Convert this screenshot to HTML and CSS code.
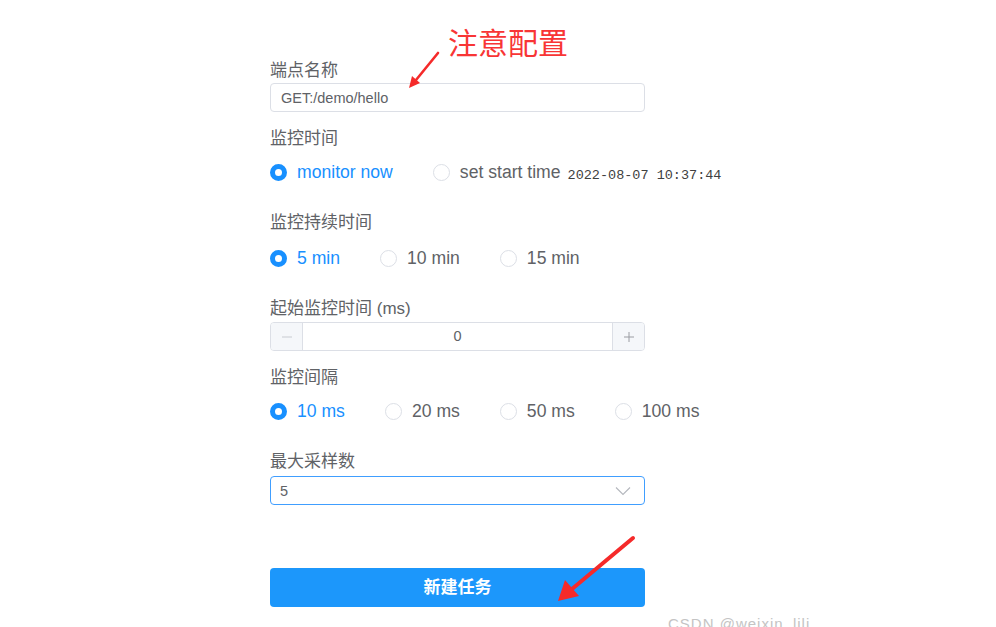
FILE: index.html
```html
<!DOCTYPE html>
<html>
<head>
<meta charset="utf-8">
<link rel="stylesheet" href="styles.css">
</head>
<body>
<div class="page">
  <form class="form">
    <div class="item item-input">
      <div class="label">端点名称</div>
      <div class="input">GET:/demo/hello</div>
    </div>
    <div class="item item-radio">
      <div class="label">监控时间</div>
      <div class="radios">
        <span class="radio checked"><span class="dot"></span><span class="rtext">monitor now</span></span>
        <span class="radio last"><span class="dot"></span><span class="rtext">set start time</span><span class="date">2022-08-07 10:37:44</span></span>
      </div>
    </div>
    <div class="item item-radio">
      <div class="label">监控持续时间</div>
      <div class="radios radios-loose">
        <span class="radio checked"><span class="dot"></span><span class="rtext">5 min</span></span>
        <span class="radio"><span class="dot"></span><span class="rtext">10 min</span></span>
        <span class="radio"><span class="dot"></span><span class="rtext">15 min</span></span>
      </div>
    </div>
    <div class="item item-input item-number">
      <div class="label">起始监控时间 (ms)</div>
      <div class="number">
        <span class="step minus"><svg width="12" height="12" viewBox="0 0 12 12"><path d="M1 6h10" stroke="#c8cbd1" stroke-width="1"/></svg></span>
        <span class="num">0</span>
        <span class="step plus"><svg width="12" height="12" viewBox="0 0 12 12"><path d="M1 6h10M6 1v10" stroke="#9a9ca2" stroke-width="1"/></svg></span>
      </div>
    </div>
    <div class="item item-radio">
      <div class="label">监控间隔</div>
      <div class="radios">
        <span class="radio checked"><span class="dot"></span><span class="rtext">10 ms</span></span>
        <span class="radio"><span class="dot"></span><span class="rtext">20 ms</span></span>
        <span class="radio"><span class="dot"></span><span class="rtext">50 ms</span></span>
        <span class="radio"><span class="dot"></span><span class="rtext">100 ms</span></span>
      </div>
    </div>
    <div class="item item-select">
      <div class="label">最大采样数</div>
      <div class="select"><span>5</span><svg width="16" height="10" viewBox="0 0 16 10"><path d="M1 1.5l7 7 7-7" fill="none" stroke="#b4b7bd" stroke-width="1.1"/></svg></div>
    </div>
    <div class="submit">新建任务</div>
  </form>
  <div class="note">注意配置</div>
  <svg class="arrows" width="996" height="627" viewBox="0 0 996 627">
    <path d="M438 53 L416 80" stroke="#f52a2a" stroke-width="2.6" stroke-linecap="round"/>
    <polygon points="409,88 412,76 420,83" fill="#f52a2a"/>
    <path d="M633 538 L572 589" stroke="#f52a2a" stroke-width="4" stroke-linecap="round"/>
    <polygon points="558,601 565,580 579,596" fill="#f52a2a"/>
  </svg>
  <div class="watermark">CSDN @weixin_lili</div>
</div>
</body>
</html>
```
FILE: styles.css
```css
html, body {
  margin: 0;
  padding: 0;
  background: #fff;
}
.page {
  position: relative;
  width: 996px;
  height: 627px;
  overflow: hidden;
  font-family: "Liberation Sans", "Noto Sans CJK SC", sans-serif;
}
.form {
  margin-left: 270px;
  width: 375px;
  padding-top: 59px;
}
.label {
  font-size: 17px;
  line-height: 24px;
  height: 24px;
  color: #606266;
}
.item-number .label {
  margin-bottom: 1px;
}
.item-select .label {
  margin-bottom: 2px;
}
.item-input {
  margin-bottom: 15px;
}
.item-radio {
  margin-bottom: 27px;
}
.input {
  box-sizing: border-box;
  height: 29px;
  border: 1px solid #dcdfe6;
  border-radius: 4px;
  padding: 0 10px;
  font-size: 14.5px;
  line-height: 28px;
  color: #606266;
}
.radios {
  margin-top: 9px;
  display: flex;
  align-items: center;
  height: 24px;
}
.radios-loose {
  margin-top: 11px;
}
.radio {
  display: flex;
  align-items: center;
  margin-right: 40px;
  font-size: 17.6px;
  color: #606266;
  white-space: nowrap;
}
.radio.last { margin-right: 0; }
.dot {
  box-sizing: border-box;
  width: 17px;
  height: 17px;
  border-radius: 50%;
  border: 1px solid #dcdfe6;
  background: #fff;
  margin-right: 10px;
  flex: none;
}
.radio.checked .dot {
  border: 5.5px solid #1890ff;
  background: #fff;
}
.radio.checked .rtext {
  color: #1890ff;
}
.date {
  font-family: "Liberation Mono", "DejaVu Sans Mono", monospace;
  font-size: 13.5px;
  color: #404040;
  margin-left: 7px;
  position: relative;
  top: 3px;
}
.number {
  box-sizing: border-box;
  height: 29px;
  border: 1px solid #dcdfe6;
  border-radius: 4px;
  display: flex;
  overflow: hidden;
}
.step {
  width: 31px;
  background: #f5f7fa;
  display: flex;
  align-items: center;
  justify-content: center;
  flex: none;
}
.minus { border-right: 1px solid #dcdfe6; }
.plus { border-left: 1px solid #dcdfe6; }
.num {
  flex: 1;
  text-align: center;
  font-size: 14.5px;
  line-height: 27px;
  color: #606266;
}
.select {
  box-sizing: border-box;
  height: 29px;
  border: 1px solid #409eff;
  border-radius: 4px;
  padding: 0 13px 0 9px;
  display: flex;
  align-items: center;
  justify-content: space-between;
  font-size: 14.5px;
  color: #606266;
}
.submit {
  margin-top: 63px;
  height: 39px;
  border-radius: 4px;
  background: #1c97fb;
  color: #fff;
  font-weight: bold;
  font-size: 17px;
  line-height: 39px;
  text-align: center;
}
.note {
  position: absolute;
  left: 448px;
  top: 21px;
  font-size: 30px;
  line-height: 40px;
  color: #f83535;
  font-family: "Noto Sans CJK SC", sans-serif;
}
.arrows {
  position: absolute;
  left: 0;
  top: 0;
  pointer-events: none;
}
.watermark {
  position: absolute;
  left: 668px;
  top: 615px;
  font-size: 15px;
  line-height: 18px;
  color: #c4c4c4;
  letter-spacing: 1px;
}
```
